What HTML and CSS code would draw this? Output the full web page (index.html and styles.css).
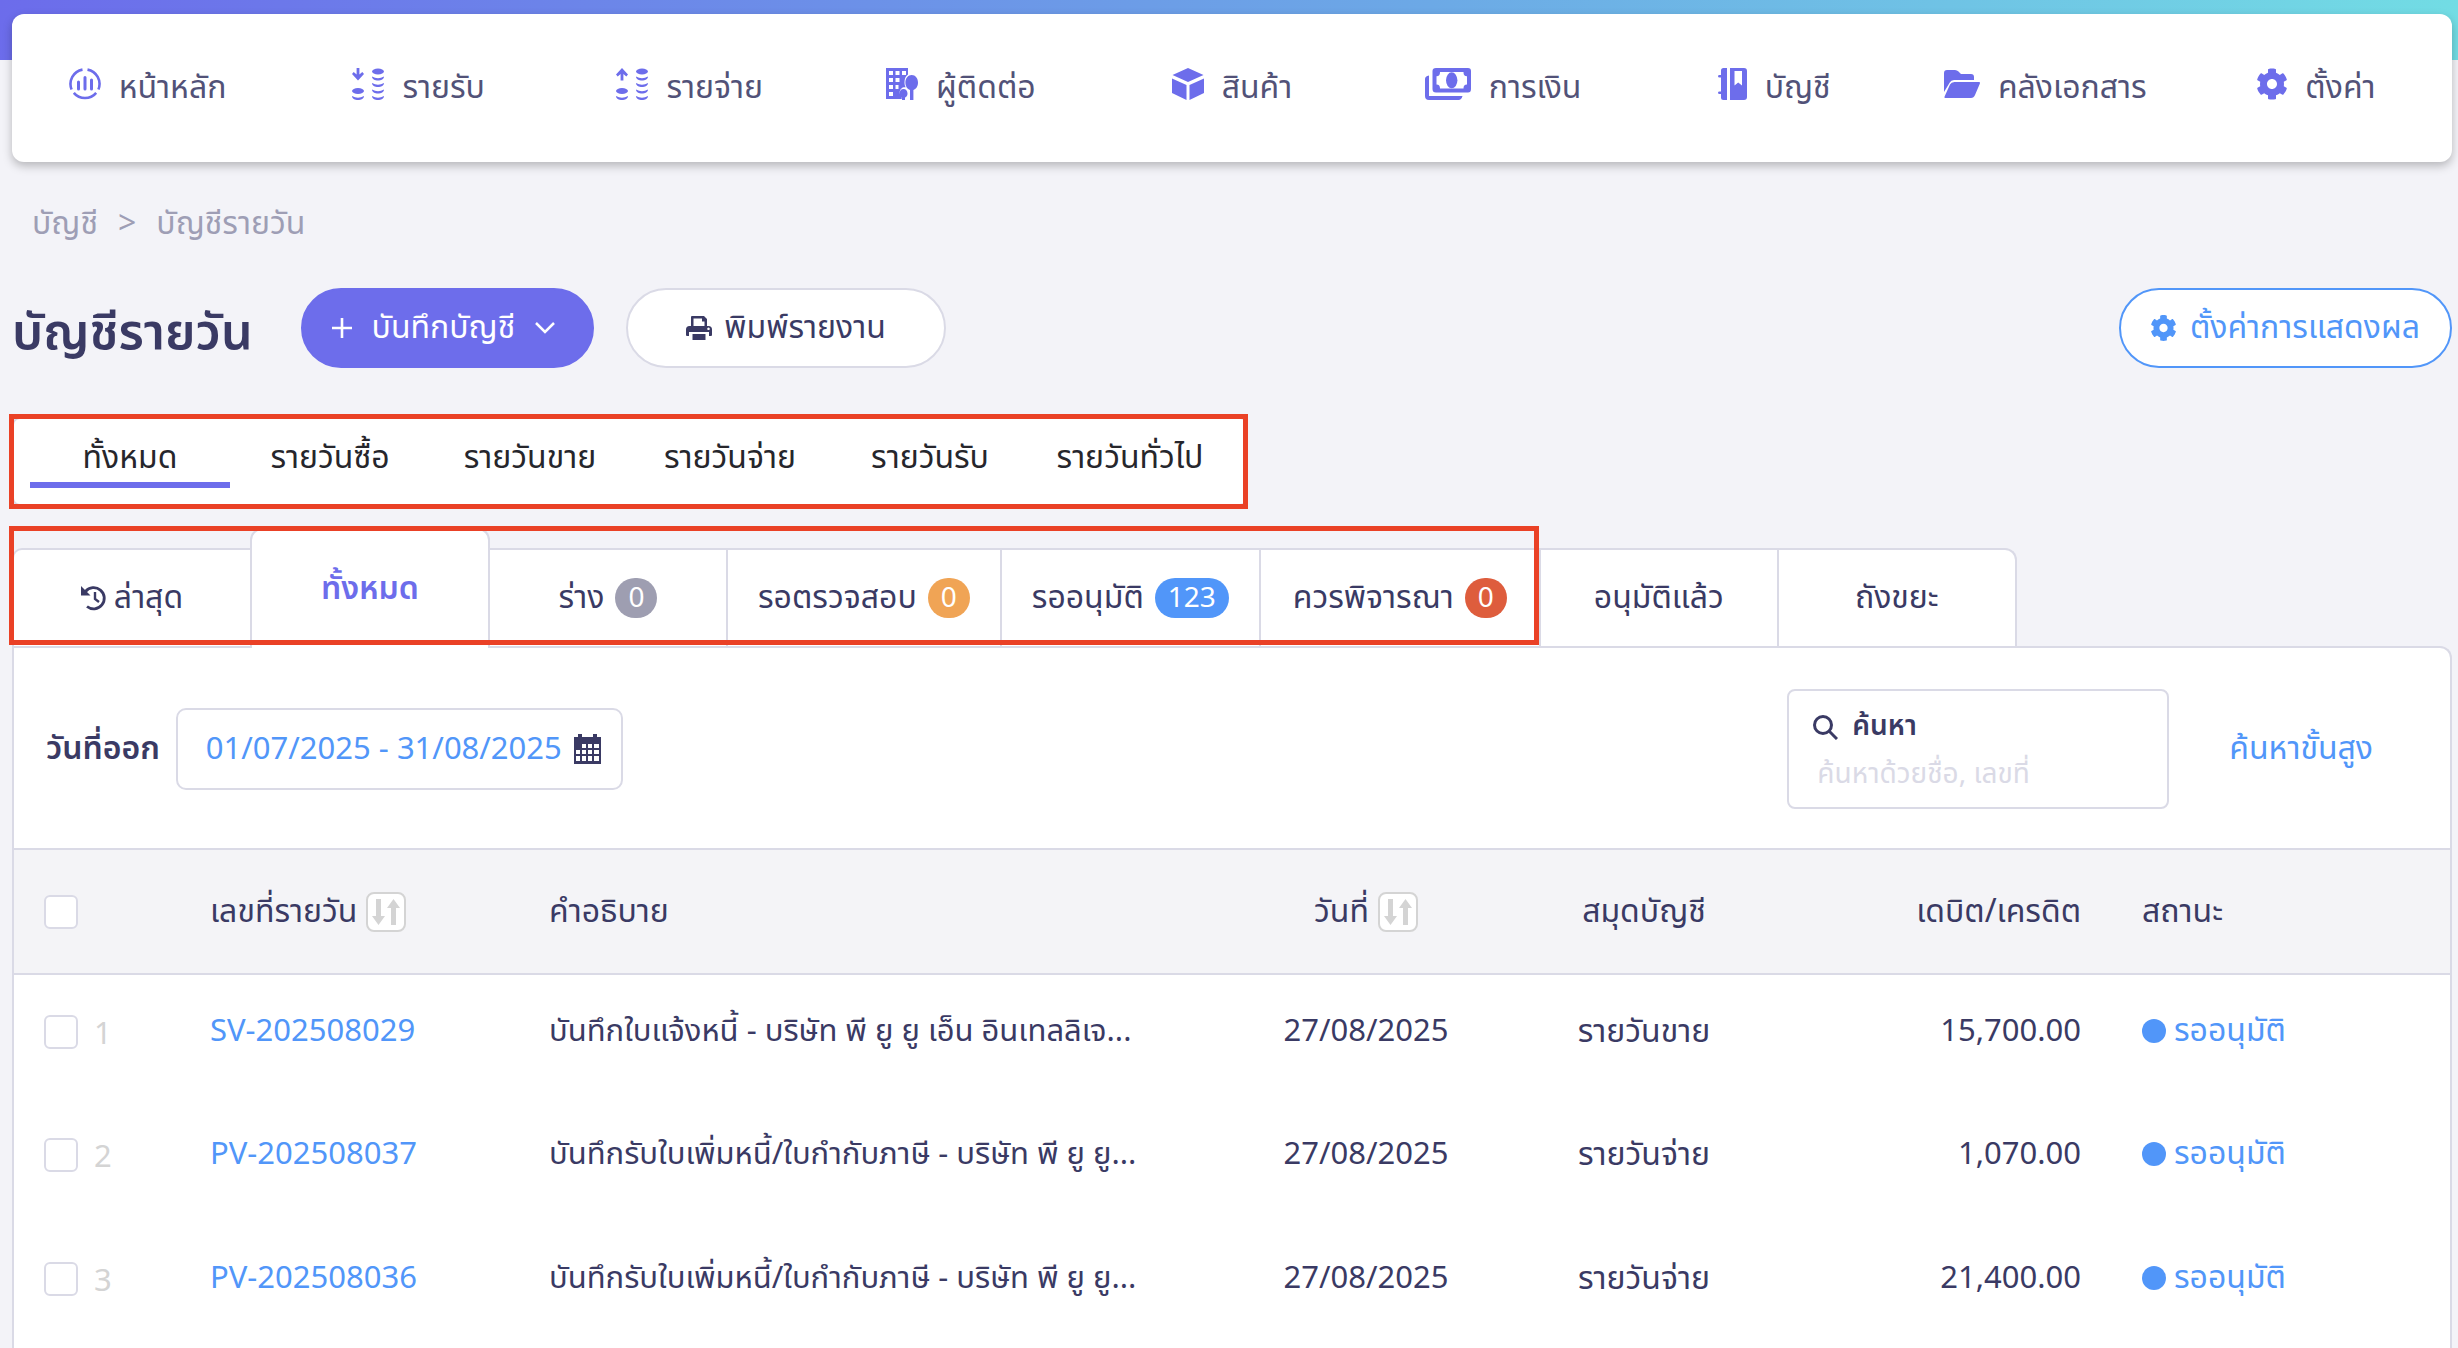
FILE: index.html
```html
<!DOCTYPE html>
<html lang="th">
<head>
<meta charset="utf-8">
<title>บัญชีรายวัน</title>
<link rel="stylesheet" href="styles.css">
</head>
<body>
<svg class="sprite" aria-hidden="true">
  <symbol id="cog" viewBox="16 8 480 496"><path d="M487.4 315.7l-42.6-24.6c4.3-23.2 4.3-47 0-70.2l42.6-24.6c4.9-2.8 7.1-8.6 5.5-14-11.1-35.6-30-67.8-54.7-94.6-3.8-4.1-10-5.1-14.8-2.3L380.8 110c-17.9-15.4-38.5-27.3-60.8-35.1V25.8c0-5.6-3.9-10.5-9.4-11.7-36.7-8.2-74.3-7.8-109.2 0-5.500 1.2-9.4 6.1-9.4 11.7V75c-22.2 7.9-42.8 19.8-60.8 35.1L88.7 85.500c-4.9-2.8-11-1.9-14.8 2.3-24.7 26.7-43.6 58.9-54.7 94.6-1.7 5.4.6 11.2 5.500 14L67.3 221c-4.3 23.2-4.3 47 0 70.2l-42.6 24.6c-4.9 2.8-7.1 8.6-5.500 14 11.1 35.6 30 67.8 54.7 94.6 3.8 4.1 10 5.1 14.8 2.3l42.6-24.6c17.9 15.4 38.5 27.3 60.8 35.1v49.2c0 5.6 3.9 10.5 9.4 11.7 36.7 8.2 74.3 7.8 109.2 0 5.500-1.2 9.4-6.1 9.4-11.7v-49.2c22.2-7.9 42.8-19.8 60.8-35.1l42.6 24.6c4.9 2.8 11 1.9 14.8-2.3 24.7-26.7 43.6-58.9 54.7-94.6 1.5-5.500-.7-11.3-5.6-14.1zM256 336c-44.1 0-80-35.9-80-80s35.9-80 80-80 80 35.9 80 80-35.9 80-80 80z"/></symbol>
  <symbol id="sort" viewBox="0 0 32 32"><path d="M6 3h5v17h4L8.500 29 2 20h4zM21 29h5V12h4L23.500 3 17 12h4z"/></symbol>
</svg>

<nav class="nav" aria-label="เมนูหลัก">
  <a href="#"><svg width="32" height="32" viewBox="0 0 32 32" fill="none" stroke="currentColor" stroke-width="2.600"><path d="M13.500 1.600A14.600 14.600 0 0 0 2.600 21.500M18.500 1.600A14.600 14.600 0 0 1 29.400 21.500M4.800 24.800A14.600 14.600 0 0 0 27.200 24.800"/><path stroke-width="3" stroke-linecap="round" d="M9.500 14v7M16 9.500v11.500M22.500 12v9"/></svg><span>หน้าหลัก</span></a>
  <a href="#"><svg width="32" height="32" viewBox="0 0 32 32"><path d="M4.600 0h2.800v6.500L10.300 4 12 6 6 12.500 0 6l1.700-2 2.900 2.500z"/><ellipse cx="6" cy="23" rx="6" ry="2.900"/><ellipse cx="26" cy="3.500" rx="6" ry="2.900"/><path d="M0 28q6 3.500 12 0c0 5.300-12 5.300-12 0zM20 8.500q6 3.500 12 0c0 5.300-12 5.300-12 0zM20 15q6 3.500 12 0c0 5.300-12 5.300-12 0zM20 21.500q6 3.500 12 0c0 5.300-12 5.300-12 0zM20 28q6 3.500 12 0c0 5.300-12 5.300-12 0z"/></svg><span>รายรับ</span></a>
  <a href="#"><svg width="32" height="32" viewBox="0 0 32 32"><path d="M4.600 12.500h2.800V6l2.900 2.500L12 6.500 6 0 0 6.500l1.700 2L4.600 6z"/><ellipse cx="6" cy="23" rx="6" ry="2.900"/><ellipse cx="26" cy="3.500" rx="6" ry="2.900"/><path d="M0 28q6 3.500 12 0c0 5.300-12 5.300-12 0zM20 8.500q6 3.500 12 0c0 5.300-12 5.300-12 0zM20 15q6 3.500 12 0c0 5.300-12 5.300-12 0zM20 21.500q6 3.500 12 0c0 5.300-12 5.300-12 0zM20 28q6 3.500 12 0c0 5.300-12 5.300-12 0z"/></svg><span>รายจ่าย</span></a>
  <a href="#"><svg width="32" height="32" viewBox="0 0 32 32"><path fill-rule="evenodd" d="M0 0h22v6.500c-2.500 1.500-3.500 4.500-3.500 8 0 2 .5 3.500 1.200 4.800-3-.6-6 1.500-6 5 0 2 .8 3.500 2 4.400V31H0zM3 3v4h4V3zM9.500 3v4h4V3zM16 3v4h4V3zM3 10v4h4v-4zM9.500 10v4h4v-4zM3 17v4h4v-4zM9.500 17v4h3v-4zM3 24v4h4v-4z"/><path d="M25.700 7c3.700 0 6.300 3.400 6.300 7.500 0 3.800-2 6.800-4.600 7.400V32H24V21.900c-2.600-.6-4.600-3.600-4.600-7.400 0-4.100 2.600-7.500 6.300-7.500z"/><path d="M17.500 21c2.300 0 4 2 4 4.400 0 2-1 3.500-2.500 4V32h-3v-2.600c-1.500-.5-2.500-2-2.500-4 0-2.400 1.700-4.400 4-4.400z"/></svg><span>ผู้ติดต่อ</span></a>
  <a href="#"><svg width="32" height="32" viewBox="0 0 32 32"><path d="M16 0l15.500 7L16 14 .5 7zM0 10.500l14.500 6.600V32L0 25zM32 10.500l-14.500 6.600V32L32 25z"/></svg><span>สินค้า</span></a>
  <a href="#"><svg width="46" height="32" viewBox="0 0 46 32"><path fill-rule="evenodd" d="M11 0h32q3 0 3 3v18q0 3.500-3 3.500H11q-3.500 0-3.500-3.500V3q0-3 3.500-3zM15 4c0 3-1 4.200-3.500 4.200v8.300c2.500 0 3.500 1.200 3.500 4h23.500c0-2.800 1-4 3.500-4V8.200C39.500 8.200 38.500 7 38.500 4z"/><ellipse cx="26.700" cy="12.300" rx="5.700" ry="8"/><path d="M0 11q0-3 4-3.500V28h33.500q-1 4-4 4H4q-4 0-4-4z"/></svg><span>การเงิน</span></a>
  <a href="#"><svg width="29" height="32" viewBox="0 0 29 32"><path fill-rule="evenodd" d="M5.500 0H9v32H5.500Q3 32 3 29.500V26H1.500q-1.500 0-1.500-1.300 0-1.200 1.500-1.200H3v-14H1.500Q0 9.500 0 8.300 0 7 1.500 7H3V2.500Q3 0 5.500 0zM12 0h14q3 0 3 3v26q0 3-3 3H12zm4.500 3v14.500l3.700-3 3.800 3V3z"/></svg><span>บัญชี</span></a>
  <a href="#"><svg width="36" height="28" viewBox="0 0 36 28"><path d="M0 22V3q0-3 3-3h8q2 0 3.500 1.500L17 4h10q3 0 3 3v3H10q-3 0-4.200 2.500z"/><path d="M10.500 12H35q1.500 0 .8 1.800L31 25q-1.200 3-4 3H1.500Q0 28 .7 26.200L6 14.500Q7.200 12 10.500 12z"/></svg><span>คลังเอกสาร</span></a>
  <a href="#"><svg width="30" height="32"><use href="#cog"/></svg><span>ตั้งค่า</span></a>
</nav>

<main>
  <div class="crumbs"><a href="#">บัญชี</a><span>&gt;</span><span>บัญชีรายวัน</span></div>

  <header class="head">
    <h1>บัญชีรายวัน</h1>
    <button class="btn primary" type="button"><svg width="20" height="20" viewBox="0 0 20 20"><path d="M8.700 0h2.600v8.700H20v2.600h-8.700V20H8.700v-8.700H0V8.700h8.700z"/></svg>บันทึกบัญชี<svg width="20" height="12" viewBox="0 0 20 12" fill="none" stroke="currentColor" stroke-width="2.500"><path d="M1 1l9 9 9-9"/></svg></button>
    <button class="btn plain" type="button"><svg width="26" height="24" viewBox="0 0 26 24"><path fill-rule="evenodd" d="M6 0h12l3 3v7h1.500Q26 10 26 13.500V19q0 1-1 1h-2v-4H3v4H1q-1 0-1-1v-5.500Q0 10 3.500 10H5V1q0-1 1-1zm1.500 2.500V10h11V5.500H16v-3zM22.500 11.500a1.300 1.300 0 1 0 .01 0z"/><path d="M6.500 18h13v6h-13z"/></svg>พิมพ์รายงาน</button>
    <button class="btn outline" type="button"><svg width="25" height="26"><use href="#cog"/></svg>ตั้งค่าการแสดงผล</button>
  </header>

  <div class="types marked">
    <button class="on" type="button">ทั้งหมด</button>
    <button type="button">รายวันซื้อ</button>
    <button type="button">รายวันขาย</button>
    <button type="button">รายวันจ่าย</button>
    <button type="button">รายวันรับ</button>
    <button type="button">รายวันทั่วไป</button>
  </div>

  <div class="tabs">
    <div class="group marked">
      <button class="recent" type="button"><svg width="26" height="26" viewBox="0 0 26 26" fill="none" stroke="currentColor" stroke-width="2.800"><path d="M4.500 6.500A10.600 10.600 0 1 1 6 21.500"/><path stroke-width="2.400" d="M14 7v7l4 3"/><path fill="currentColor" stroke="none" d="M0 1v9.500h9.500z"/></svg>ล่าสุด</button>
      <button class="on" type="button">ทั้งหมด</button>
      <button type="button">ร่าง<span class="badge grey">0</span></button>
      <button type="button">รอตรวจสอบ<span class="badge orange">0</span></button>
      <button type="button">รออนุมัติ<span class="badge blue">123</span></button>
      <button class="wide" type="button">ควรพิจารณา<span class="badge red">0</span></button>
    </div>
    <button type="button">อนุมัติแล้ว</button>
    <button class="last" type="button">ถังขยะ</button>
  </div>

  <section class="panel">
    <div class="filters">
      <label class="date-label" for="range">วันที่ออก</label>
      <div class="date-box">
        <input id="range" type="text" value="01/07/2025 - 31/08/2025">
        <svg width="27" height="30" viewBox="0 0 27 30"><path fill-rule="evenodd" d="M4 0h4v3h11V0h4v3h4v27H0V3h4zM2 16v4h4v-4zM8 10v4h4v-4zM14 10v4h4v-4zM20 10v4h5v-4zM8 16v4h4v-4zM14 16v4h4v-4zM20 16v4h5v-4zM2 22v5h4v-5zM8 22v5h4v-5zM14 22v5h4v-5zM20 22v5h5v-5z"/></svg>
      </div>
      <div class="search">
        <label for="q"><svg width="25" height="25" viewBox="0 0 25 25" fill="none" stroke="currentColor" stroke-width="3"><circle cx="10" cy="10" r="8.500"/><path d="M16 16l8 8"/></svg>ค้นหา</label>
        <input id="q" type="text" placeholder="ค้นหาด้วยชื่อ, เลขที่">
      </div>
      <a class="advanced" href="#">ค้นหาขั้นสูง</a>
    </div>

    <table>
      <colgroup><col class="c-check"><col class="c-id"><col><col class="c-mid"><col class="c-mid"><col class="c-amount"><col class="c-status"></colgroup>
      <thead>
        <tr>
          <th class="pick"><input type="checkbox" aria-label="เลือกทั้งหมด"></th>
          <th><div class="sortable">เลขที่รายวัน<button type="button" aria-label="เรียงตามเลขที่"><svg width="32" height="32"><use href="#sort"/></svg></button></div></th>
          <th>คำอธิบาย</th>
          <th><div class="sortable mid">วันที่<button type="button" aria-label="เรียงตามวันที่"><svg width="32" height="32"><use href="#sort"/></svg></button></div></th>
          <th class="center">สมุดบัญชี</th>
          <th class="amount">เดบิต/เครดิต</th>
          <th>สถานะ</th>
        </tr>
      </thead>
      <tbody>
        <tr>
          <td class="pick"><label><input type="checkbox"><span>1</span></label></td>
          <td class="num"><a href="#">SV-202508029</a></td>
          <td class="num">บันทึกใบแจ้งหนี้ - บริษัท พี ยู ยู เอ็น อินเทลลิเจ...</td>
          <td class="num center">27/08/2025</td>
          <td class="center">รายวันขาย</td>
          <td class="num amount">15,700.00</td>
          <td><span class="status">รออนุมัติ</span></td>
        </tr>
        <tr>
          <td class="pick"><label><input type="checkbox"><span>2</span></label></td>
          <td class="num"><a href="#">PV-202508037</a></td>
          <td class="num">บันทึกรับใบเพิ่มหนี้/ใบกำกับภาษี - บริษัท พี ยู ยู...</td>
          <td class="num center">27/08/2025</td>
          <td class="center">รายวันจ่าย</td>
          <td class="num amount">1,070.00</td>
          <td><span class="status">รออนุมัติ</span></td>
        </tr>
        <tr>
          <td class="pick"><label><input type="checkbox"><span>3</span></label></td>
          <td class="num"><a href="#">PV-202508036</a></td>
          <td class="num">บันทึกรับใบเพิ่มหนี้/ใบกำกับภาษี - บริษัท พี ยู ยู...</td>
          <td class="num center">27/08/2025</td>
          <td class="center">รายวันจ่าย</td>
          <td class="num amount">21,400.00</td>
          <td><span class="status">รออนุมัติ</span></td>
        </tr>
      </tbody>
    </table>
  </section>
</main>
</body>
</html>
```
FILE: styles.css
```css
:root {
  --ink: #3a3a64;
  --purple: #6d6deb;
  --blue: #5196f9;
  --line: #dadae6;
  --mark: #ea4126;
}
* { box-sizing: border-box; }
body {
  margin: 0;
  min-height: 100vh;
  padding: 14px 6px 0 12px;
  display: flex;
  flex-direction: column;
  background: #f3f3f8 linear-gradient(100deg, #6c6ceb, #6ca9e6 58%, #72dde4) no-repeat top / 100% 60px;
  color: var(--ink);
  font: 400 32px/48px "Noto Sans Thai", "Noto Sans", sans-serif;
}
button, input { font: inherit; color: inherit; }
button { border: 0; background: none; padding: 0; white-space: nowrap; }
a { color: inherit; text-decoration: none; }
svg { flex: none; }
svg:not([fill]) { fill: currentColor; }
.sprite { position: absolute; width: 0; height: 0; }

.nav {
  display: grid;
  grid-template-columns: repeat(9, 1fr);
  padding: 50px 0;
  border-radius: 12px;
  background: #fff;
  box-shadow: 0 4px 10px rgba(0, 0, 0, .25);
}
.nav a { display: flex; align-items: center; justify-content: center; gap: 18px; white-space: nowrap; color: #525278; }
.nav svg { margin-bottom: 8px; color: var(--purple); }

main { flex: 1; display: flex; flex-direction: column; }
.crumbs { display: flex; gap: 20px; margin: 38px 0 0 20px; color: #9e9eb5; }

.head { display: flex; align-items: center; margin-top: 40px; }
h1 { height: 80px; margin: 0; padding-top: 6px; font-size: 50px; line-height: 80px; font-weight: 600; }
.btn {
  display: flex;
  align-items: center;
  height: 80px;
  border-radius: 40px;
  border: 2px solid var(--line);
  background: #fff;
}
.primary { gap: 20px; margin-left: 48px; padding: 0 37px 0 29px; border-color: var(--purple); background: var(--purple); color: #fff; }
.plain { gap: 12px; margin-left: 32px; padding: 0 58px; }
.outline { gap: 14px; margin-left: auto; padding: 0 30px; border-color: var(--blue); color: var(--blue); }

.marked { position: relative; }
.marked::after { content: ""; position: absolute; z-index: 2; border: 5px solid var(--mark); pointer-events: none; }
.types {
  display: flex;
  align-self: flex-start;
  margin-top: 49px;
  padding: 0 16px 16px;
  border: 2px solid var(--line);
  border-radius: 8px;
  background: #fff;
  color: #26262c;
}
.types::after { inset: -5px -2px -5px -5px; }
.types button { width: 200px; height: 69px; padding-top: 14px; border-bottom: 6px solid transparent; }
.types .on { border-color: var(--purple); }

.tabs { display: flex; align-items: flex-end; position: relative; z-index: 1; margin: 22px 0 -2px; }
.group { display: flex; align-items: flex-end; }
.group::after { inset: -2px 0 3px -3px; }
.tabs button {
  display: flex;
  align-items: center;
  justify-content: center;
  gap: 11px;
  min-width: 238px;
  height: 98px;
  margin-bottom: 2px;
  padding: 0 30px;
  border: solid var(--line);
  border-width: 2px 0 0 2px;
  background: #fff;
}
.tabs .recent { gap: 7px; border-top-left-radius: 10px; }
.tabs .on {
  height: 120px;
  margin: 0 -2px 0 0;
  min-width: 240px;
  border-right-width: 2px;
  border-radius: 12px 12px 0 0;
  color: var(--purple);
  font-weight: 600;
  z-index: 1;
}
.tabs .wide { min-width: 280px; }
.tabs .last { min-width: 240px; border-right-width: 2px; border-top-right-radius: 12px; }
.badge { padding: 1px 13px 0; border-radius: 20px; font-size: 28px; line-height: 39px; color: #fff; }
.grey { background: #9e9eb1; }
.orange { background: #f0a455; }
.blue { background: var(--blue); }
.red { background: #de5d3d; }

.panel { flex: 1; border: 2px solid var(--line); border-bottom: 0; border-top-right-radius: 12px; background: #fff; }
.filters { display: flex; align-items: center; height: 200px; padding: 2px 77px 0 32px; }
.date-label { margin-right: 16px; font-weight: 600; }
.date-box { display: flex; align-items: center; width: 447px; height: 82px; padding: 0 20px 0 28px; border: 2px solid var(--line); border-radius: 10px; }
.date-box input { flex: 1; min-width: 0; padding: 2px 0 0; border: 0; font-size: 31px; color: var(--blue); }
.search { width: 382px; height: 120px; margin-left: auto; padding: 12px 24px 8px; border: 2px solid var(--line); border-radius: 8px; }
.search label { display: flex; align-items: center; gap: 14px; font-size: 28px; font-weight: 600; }
.search input { display: block; width: 100%; height: 48px; padding: 0 4px; border: 0; background: none; font-size: 28px; }
.search input::placeholder { color: var(--line); opacity: 1; }
.advanced { margin-left: 60px; color: var(--blue); }

table { width: 100%; table-layout: fixed; border-collapse: collapse; }
.c-check { width: 184px; }
.c-id { width: 339px; }
.c-mid { width: 278px; }
.c-amount { width: 347px; }
.c-status { width: 320px; }
th, td { height: 124px; padding: 0 12px; text-align: left; font-weight: inherit; white-space: nowrap; }
th { height: 125px; border: solid var(--line); border-width: 2px 0; background: #f4f4f7; }
td { padding-bottom: 10px; }
.pick { padding-left: 30px; }
.pick label { display: flex; align-items: center; gap: 16px; font-size: 31px; color: #d4d4d4; }
.pick span { padding-top: 6px; }
.pick input { appearance: none; display: block; width: 34px; height: 34px; margin: 0; border: 2px solid var(--line); border-radius: 6px; background: #fff; }
.num { font-size: 31px; }
.num a { color: var(--blue); }
.center { text-align: center; }
.amount { text-align: right; padding-right: 49px; }
.sortable { display: flex; align-items: center; gap: 9px; }
.mid { justify-content: center; }
.sortable button { display: flex; align-items: center; justify-content: center; width: 40px; height: 40px; border: 2px solid #d4d4d4; border-radius: 8px; background: #fff; color: #d4d4d4; }
.status { display: inline-flex; align-items: center; gap: 8px; color: var(--blue); }
.status::before { content: ""; width: 24px; height: 24px; border-radius: 50%; background: var(--blue); }
```
